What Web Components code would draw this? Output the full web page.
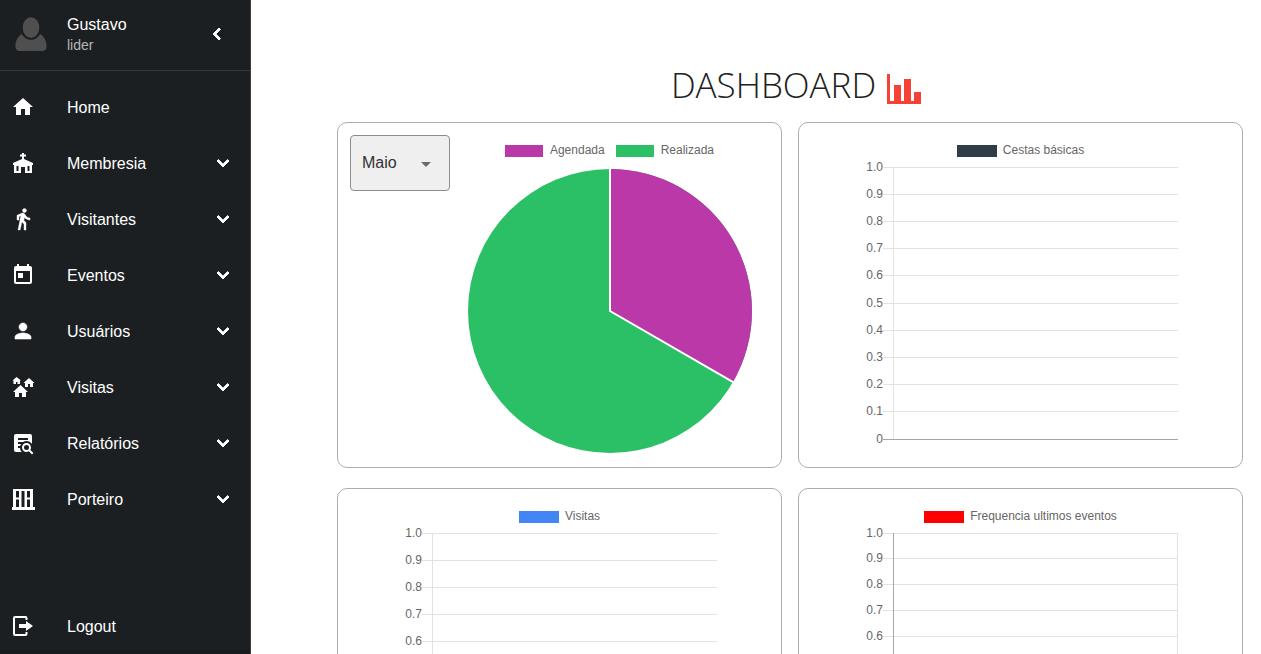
<!DOCTYPE html>
<html lang="pt-BR">
<head>
<meta charset="utf-8">
<title>Dashboard</title>
<style>
html { scrollbar-width: none; }
html, body { margin: 0; }
body { font-family: "Liberation Sans", Arial, sans-serif; background: #fff; }
</style>
</head>
<body>
<app-shell>
  <side-bar slot="side" name="Gustavo" role-name="lider">
    <nav-item icon="home" href="#home">Home</nav-item>
    <nav-item icon="church">Membresia</nav-item>
    <nav-item icon="walk">Visitantes</nav-item>
    <nav-item icon="event">Eventos</nav-item>
    <nav-item icon="person">Usuários</nav-item>
    <nav-item icon="village">Visitas</nav-item>
    <nav-item icon="report">Relatórios</nav-item>
    <nav-item icon="gate">Porteiro</nav-item>
    <nav-item slot="footer" icon="logout" href="#logout">Logout</nav-item>
  </side-bar>
  <page-title>DASHBOARD</page-title>
  <card-grid>
    <chart-card>
      <month-select></month-select>
      <pie-chart></pie-chart>
    </chart-card>
    <chart-card><axis-chart label="Cestas básicas" color="#303d47" step="27.2" base="dark"></axis-chart></chart-card>
    <chart-card><axis-chart label="Visitas" color="#4285f4" step="27.2" base="dark"></axis-chart></chart-card>
    <chart-card><axis-chart label="Frequencia ultimos eventos" color="#ff0000" step="25.8" axis="dark" closed></axis-chart></chart-card>
  </card-grid>
</app-shell>
<script>
const icons = {
  home: '<path d="M10 20v-6h4v6h5v-8h3L12 3 2 12h3v8z"/>',
  church: '<path d="M11 2h2v1.500h2v2h-2V8l9 4v2h-1v8h-7v-6h-4v6H3v-8H2v-2l9-4V5.500H9v-2h2zM5.500 15v5h2v-5zM16.500 15v5h2v-5z" fill-rule="evenodd"/>',
  walk: '<path d="M13.5 5.5c1.1 0 2-.9 2-2s-.9-2-2-2-2 .9-2 2 .9 2 2 2zM9.8 8.9 7 23h2.1l1.8-8 2.1 2v6h2v-7.5l-2.1-2 .6-3C14.8 12 16.8 13 19 13v-2c-1.9 0-3.5-1-4.3-2.4l-1-1.6c-.4-.6-1-1-1.7-1-.3 0-.5.1-.8.1L6 8.3V13h2V9.6l1.8-.7" stroke="#fff" stroke-width=".4"/>',
  event: '<path d="M19 3h-1V1h-2v2H8V1H6v2H5c-1.11 0-1.99.9-1.99 2L3 19c0 1.1.89 2 2 2h14c1.1 0 2-.9 2-2V5c0-1.1-.9-2-2-2zm0 16H5V8h14v11zM7 10h5v5H7z"/>',
  person: '<path d="M12 12c2.21 0 4-1.79 4-4s-1.79-4-4-4-4 1.79-4 4 1.790 4 4 4zm0 2c-2.670 0-8 1.340-8 4v2h16v-2c0-2.660-5.330-4-8-4z" stroke="#fff" stroke-width=".6"/>',
  village: '<path d="M5.500 2 1.500 5.500h1V9H5V7h1.500v2H9V5.500h1zM18 3l-5.500 5H14v4h3v-3h2v3h3V8h1.500zM9.500 10 2 17h2v5h4v-4h3v4h4v-5h2z"/>',
  report: '<path d="M15.500 12C18 12 20 14 20 16.500C20 17.380 19.750 18.210 19.310 18.900L22.390 22L21 23.390L17.880 20.320C17.190 20.750 16.370 21 15.500 21C13 21 11 19 11 16.500C11 14 13 12 15.500 12M15.500 14A2.500 2.500 0 0 0 13 16.500A2.500 2.500 0 0 0 15.500 19A2.500 2.500 0 0 0 18 16.500A2.500 2.500 0 0 0 15.500 14M7 15V17H9C9.140 18.550 9.800 19.940 10.810 21H5C3.890 21 3 20.100 3 19V5C3 3.890 3.890 3 5 3H19A2 2 0 0 1 21 5V13.030C19.850 11.210 17.820 10 15.500 10C14.230 10 13.040 10.370 12.040 11H7V13H10C9.640 13.600 9.340 14.280 9.170 15H7M17 9V7H7V9H17Z"/>',
  gate: '<path fill-rule="evenodd" d="M2 2h20v18h2v3H1v-3h1zM5 4v6.500h3V4zM5 12.500V20h3v-7.500zM10.500 4v16h3V4zM16 4v6.500h3V4zM16 12.500V20h3v-7.500z"/>',
  logout: '<path d="M2 4a2 2 0 0 1 2-2h10.500a2 2 0 0 1 2 2v2h-2V4H4v16h10.500v-2h2v2a2 2 0 0 1-2 2H4a2 2 0 0 1-2-2zM8 10h7V7l7 5-7 5v-3H8z"/>'
};

function define(name, render) {
  customElements.define(name, class extends HTMLElement {
    constructor() {
      super();
      this.attachShadow({ mode: 'open' });
    }
    connectedCallback() {
      this.shadowRoot.innerHTML = render(this);
    }
  });
}

define('app-shell', () => `
<style>
:host { display: grid; grid-template-columns: 251px minmax(0, 1fr); align-items: start; }
main { padding: 60px 0 20px 86px; }
</style>
<slot name="side"></slot>
<main><slot></slot></main>`);

define('side-bar', el => `
<style>
:host { display: flex; flex-direction: column; position: sticky; top: 0; height: 100vh; box-sizing: border-box; background: #1b1f22; color: #fff; border-right: 1px solid #3a3e41; box-shadow: inset 0 -4px #171a1f; }
header { display: flex; align-items: center; height: 68px; padding: 0 21px 2px 15px; border-bottom: 1px solid #363b3e; }
.avatar { width: 32px; height: 35px; margin-right: 20px; }
.who { flex: 1; display: flex; flex-direction: column; }
.name { font-size: 16px; line-height: 22px; }
.role { font-size: 14px; line-height: 18px; color: #b4b6b8; }
button { display: flex; padding: 0; border: 0; background: none; color: inherit; }
nav { flex: 1; display: flex; flex-direction: column; padding-top: 8px; }
.end { margin-top: auto; }
</style>
<header>
  <svg class="avatar" viewBox="0 0 32 36" fill="#4f4f4f" aria-hidden="true">
    <ellipse cx="16" cy="11" rx="8.500" ry="10.700"/>
    <path d="M6.500 17.500C3 19.500 0 24 0 30c0 3.500 2 5 5 5h22c3 0 5-1.500 5-5 0-6-3-10.500-6.500-12.500C23.500 21 20 23.500 16 23.500S8.500 21 6.500 17.500z"/>
  </svg>
  <div class="who"><span class="name">${el.getAttribute('name')}</span><span class="role">${el.getAttribute('role-name')}</span></div>
  <button type="button" aria-label="Recolher menu"><svg width="24" height="24" viewBox="0 0 24 24" fill="#fff" stroke="#fff" stroke-linejoin="round"><path d="M15.410 7.410 14 6l-6 6 6 6 1.410-1.410L10.830 12z"/></svg></button>
</header>
<nav><slot></slot><div class="end"><slot name="footer"></slot></div></nav>`);

define('nav-item', el => {
  const href = el.getAttribute('href');
  const body = `<svg viewBox="0 0 24 24" aria-hidden="true">${icons[el.getAttribute('icon')]}</svg><span><slot></slot></span>`;
  return `
<style>
:host { display: block; }
a, button { display: flex; align-items: center; width: 100%; height: 56px; box-sizing: border-box; padding: 0 15px 0 11px; border: 0; background: none; color: #fff; font: 16px/24px "Liberation Sans", Arial, sans-serif; text-align: left; text-decoration: none; }
svg { width: 24px; height: 24px; fill: #fff; flex: none; }
span { flex: 1; margin-left: 32px; padding-top: 2px; }
.more { stroke: #fff; stroke-width: 1; stroke-linejoin: round; }
</style>` + (href
    ? `<a href="${href}">${body}</a>`
    : `<button type="button" aria-expanded="false">${body}<svg class="more" viewBox="0 0 24 24" aria-hidden="true"><path d="M16.590 8.590 12 13.170 7.410 8.590 6 10l6 6 6-6z"/></svg></button>`);
});

define('page-title', () => `
<style>
:host { display: block; margin-bottom: 12px; }
h1 { display: flex; justify-content: center; align-items: center; gap: 11px; height: 50px; margin: 0; color: #212121; font: 350 35px/50px "Open Sans", "Noto Sans", sans-serif; }
svg { width: 40px; height: 32px; margin-top: 8px; }
</style>
<h1><slot></slot><svg viewBox="0 0 40 32" fill="#f44336" aria-hidden="true"><path d="M0 1h3v27h4V12h7v16h3V6h7v22h3v-9h7v12H0z"/></svg></h1>`);

define('card-grid', () => `
<style>
:host { display: grid; grid-template-columns: repeat(2, minmax(0, 1fr)); gap: 20px 16px; margin-right: 18px; }
</style>
<slot></slot>`);

define('chart-card', () => `
<style>
:host { display: flex; align-items: flex-start; min-height: 320px; padding: 12px; border: 1px solid #adadad; border-radius: 10px; }
</style>
<slot></slot>`);

define('month-select', () => `
<style>
:host { display: block; position: relative; width: 100px; flex: none; }
select { appearance: none; width: 100%; height: 56px; padding: 0 11px 2px; border: 1px solid #8c8c8c; border-radius: 4px; background: #efefef; color: #333; font: 16px "Liberation Sans", Arial, sans-serif; }
svg { position: absolute; right: 12px; top: 16px; width: 24px; height: 24px; fill: #6b6b6b; pointer-events: none; }
</style>
<select aria-label="Mês"><option>Maio</option></select>
<svg viewBox="0 0 24 24" aria-hidden="true"><path d="m7 11 5 5 5-5z"/></svg>`);

define('chart-legend', el => `
<style>
:host { display: flex; align-items: flex-end; font-size: 12px; line-height: 14px; color: #666; }
i { width: var(--key-width, 40px); height: 12px; margin-right: var(--key-gap, 6px); background: ${el.getAttribute('color')}; }
</style>
<i></i><slot></slot>`);

define('pie-chart', () => `
<style>
:host { flex: 1; display: flex; flex-direction: column; align-items: center; --key-width: 38px; --key-gap: 7px; }
.legend { display: flex; gap: 11px; padding: 8px 0 11px; }
svg { width: 286px; height: 286px; }
</style>
<div class="legend"><chart-legend color="#bb38a8">Agendada</chart-legend><chart-legend color="#2bc066">Realizada</chart-legend></div>
<svg viewBox="-143 -143 286 286" role="img" aria-label="Visitas agendadas e realizadas">
  <circle r="142" fill="#2bc066"/>
  <path d="M0 0V-142A142 142 0 0 1 122.980 71z" fill="#bb38a8"/>
  <path d="M0 -143V0L124 71.600" fill="none" stroke="#fff" stroke-width="2"/>
</svg>`);

define('axis-chart', el => {
  const step = Number(el.getAttribute('step'));
  const bottom = Math.round(step * 10) + 8;
  const dark = '#a6a6a6';
  let rows = '';
  for (let i = 0; i <= 10; i++) {
    const y = Math.floor(i * step) + 8;
    const value = i === 10 ? '0' : (1 - i / 10).toFixed(1);
    const last = i === 10 && el.getAttribute('base') === 'dark';
    rows += `<text x="22" y="${y + 4}">${value}</text><rect x="22" y="${y}" width="295" height="1" class="row"${last ? ` fill="${dark}"` : ''}/>`;
  }
  const left = el.getAttribute('axis') === 'dark' ? dark : '#e2e2e2';
  return `
<style>
:host { flex: 1; display: block; margin: 0 50px; color: #666; }
.legend { display: flex; justify-content: center; padding: 8px 0 2px; }
svg { display: block; width: 100%; height: 296px; }
text { font: 12px "Liberation Sans", Arial, sans-serif; fill: #666; text-anchor: end; }
.row { width: calc(100% - 24px); }
</style>
<div class="legend"><chart-legend color="${el.getAttribute('color')}">${el.getAttribute('label')}</chart-legend></div>
<svg role="img" aria-label="${el.getAttribute('label')}">
  <g fill="#e2e2e2">${rows}</g>
  <rect x="32" y="8" width="1" height="${bottom - 8}" fill="${left}"/>
  ${el.hasAttribute('closed') ? `<svg x="100%" overflow="visible"><rect x="-3" y="8" width="1" height="${bottom - 8}" fill="#e2e2e2"/></svg>` : ''}
</svg>`;
});
</script>
</body>
</html>
